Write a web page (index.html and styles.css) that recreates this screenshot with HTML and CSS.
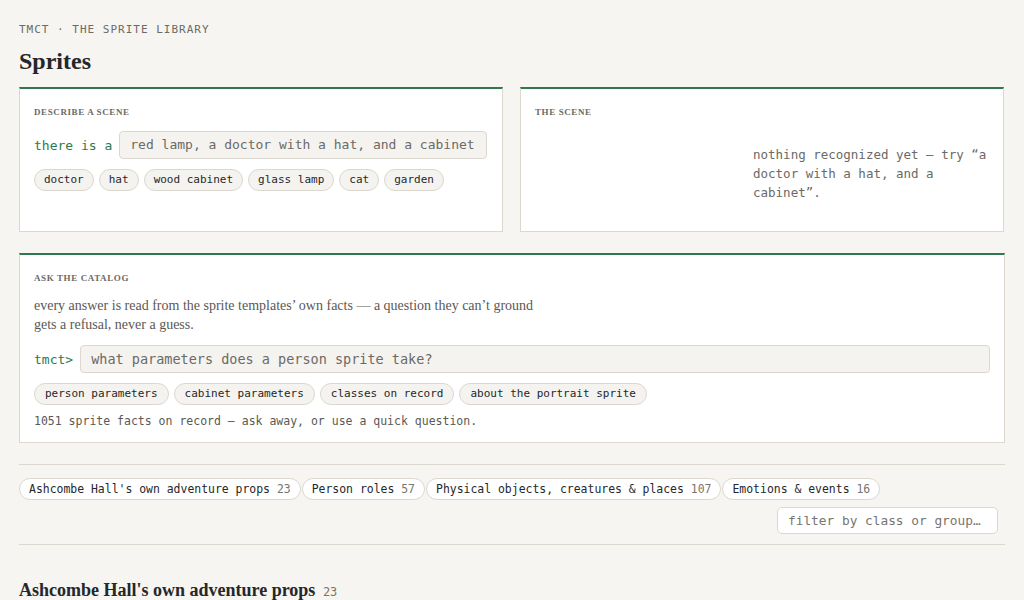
FILE: index.html
```html
<!DOCTYPE html>
<html lang="en">
<head>
    <meta charset="UTF-8">
    <title>TMCT - Sprites</title>
    <link rel="stylesheet" href="styles.css">
</head>
<body>
    <div class="page">
        <div class="eyebrow">TMCT · THE SPRITE LIBRARY</div>
        <h1>Sprites</h1>

        <div class="cards">
            <section class="card">
                <div class="card-label">Describe a scene</div>
                <div class="prompt-row">
                    <span class="prompt">there is a</span>
                    <div class="field">red lamp, a doctor with a hat, and a cabinet</div>
                </div>
                <div class="chips">
                    <span class="chip">doctor</span>
                    <span class="chip">hat</span>
                    <span class="chip">wood cabinet</span>
                    <span class="chip">glass lamp</span>
                    <span class="chip">cat</span>
                    <span class="chip">garden</span>
                </div>
            </section>
            <section class="card">
                <div class="card-label">The scene</div>
                <div class="scene">
                    <p class="scene-empty">nothing recognized yet — try “a doctor with a hat, and a cabinet”.</p>
                </div>
            </section>
        </div>

        <section class="card ask">
            <div class="card-label">Ask the catalog</div>
            <p class="lede">every answer is read from the sprite templates’ own facts — a question they can’t ground gets a refusal, never a guess.</p>
            <div class="prompt-row">
                <span class="prompt">tmct&gt;</span>
                <div class="field wide">what parameters does a person sprite take?</div>
            </div>
            <div class="chips quick">
                <span class="chip">person parameters</span>
                <span class="chip">cabinet parameters</span>
                <span class="chip">classes on record</span>
                <span class="chip">about the portrait sprite</span>
            </div>
            <div class="status">1051 sprite facts on record — ask away, or use a quick question.</div>
        </section>

        <div class="groups">
            <div class="group-tabs">
                <span class="tab">Ashcombe Hall's own adventure props <span class="count">23</span></span>
                <span class="tab">Person roles <span class="count">57</span></span>
                <span class="tab">Physical objects, creatures &amp; places <span class="count">107</span></span>
                <span class="tab">Emotions &amp; events <span class="count">16</span></span>
            </div>
            <div class="filter-row">
                <div class="filter">filter by class or group…</div>
            </div>
        </div>

        <h2>Ashcombe Hall's own adventure props <span class="count">23</span></h2>
    </div>
</body>
</html>
```

FILE: styles.css
```css
* {
    box-sizing: border-box;
    margin: 0;
    padding: 0;
}
body {
    font-family: 'Liberation Serif', 'DejaVu Serif', serif;
    background-color: #f6f5f1;
    color: #24272b;
    overflow: hidden;
}
.page {
    padding: 23px 19px 0 19px;
    width: 1024px;
}
.eyebrow {
    font-family: 'DejaVu Sans Mono', monospace;
    font-size: 11px;
    letter-spacing: 1px;
    color: #6b6a66;
    line-height: 14px;
}
h1 {
    font-size: 24px;
    font-weight: 700;
    line-height: 30px;
    margin-top: 9px;
    margin-bottom: 11px;
    color: #24272b;
}
.cards {
    display: grid;
    grid-template-columns: 484px 484px;
    gap: 17px;
    width: 986px;
}
.card {
    background-color: #ffffff;
    border: 1px solid #dcd8d0;
    border-top: 2px solid #2e7a4e;
    padding: 16px 14px 14px 14px;
    min-height: 145px;
}
.card-label {
    font-size: 9px;
    font-weight: 700;
    text-transform: uppercase;
    letter-spacing: 0.6px;
    color: #6b6a66;
    line-height: 14px;
    margin-bottom: 12px;
}
.prompt-row {
    display: flex;
    align-items: center;
    gap: 7px;
}
.prompt {
    font-family: 'DejaVu Sans Mono', monospace;
    font-size: 13px;
    color: #2e7a4e;
}
.field {
    font-family: 'DejaVu Sans Mono', monospace;
    font-size: 13px;
    color: #6b6a66;
    background-color: #f5f3ef;
    border: 1px solid #dcd8d0;
    border-radius: 4px;
    height: 28px;
    line-height: 26px;
    padding: 0 11px 0 10px;
    white-space: nowrap;
}
.field.wide {
    flex: 1;
    font-size: 13.5px;
}
.chips {
    display: flex;
    flex-wrap: wrap;
    gap: 5px;
    margin-top: 10px;
}
.chip {
    font-family: 'DejaVu Sans Mono', monospace;
    font-size: 11px;
    color: #24272b;
    background-color: #f5f3ef;
    border: 1px solid #dcd8d0;
    border-radius: 11px;
    height: 22px;
    line-height: 20px;
    padding: 0 9px;
}
.chips.quick .chip {
    padding: 0 10px;
}
.scene {
    display: flex;
    justify-content: flex-end;
    padding-top: 14px;
}
.scene-empty {
    font-family: 'DejaVu Sans Mono', monospace;
    font-size: 12.5px;
    line-height: 19px;
    color: #6b6a66;
    width: 236px;
}
.ask {
    margin-top: 21px;
    width: 986px;
    min-height: 0;
    padding-bottom: 13px;
}
.lede {
    font-size: 14px;
    line-height: 19px;
    color: #5a5955;
    width: 505px;
    margin-top: -1px;
    margin-bottom: 11px;
}
.status {
    font-family: 'DejaVu Sans Mono', monospace;
    font-size: 11.5px;
    color: #5a5955;
    margin-top: 8px;
    line-height: 16px;
}
.groups {
    width: 986px;
    margin-top: 21px;
    border-top: 1px solid #dcd8d0;
    border-bottom: 1px solid #dcd8d0;
    padding: 13px 0 10px 0;
}
.group-tabs {
    display: flex;
    flex-wrap: wrap;
    gap: 1px;
}
.tab {
    font-family: 'DejaVu Sans Mono', monospace;
    font-size: 11.45px;
    color: #24272b;
    background-color: #ffffff;
    border: 1px solid #dcd8d0;
    border-radius: 11px;
    height: 22px;
    line-height: 20px;
    padding: 0 9px;
}
.count {
    color: #77756f;
    font-family: 'DejaVu Sans Mono', monospace;
}
.filter-row {
    display: flex;
    justify-content: flex-end;
    padding-right: 7px;
    margin-top: 7px;
}
.filter {
    font-family: 'DejaVu Sans Mono', monospace;
    font-size: 12.8px;
    color: #77756f;
    background-color: #ffffff;
    border: 1px solid #dcd8d0;
    border-radius: 5px;
    width: 221px;
    height: 27px;
    line-height: 25px;
    padding: 0 10px;
}
h2 {
    font-size: 18px;
    font-weight: 700;
    margin-top: 33px;
    line-height: 24px;
}
h2 .count {
    font-size: 12px;
    font-weight: 400;
    margin-left: 3px;
}
```
